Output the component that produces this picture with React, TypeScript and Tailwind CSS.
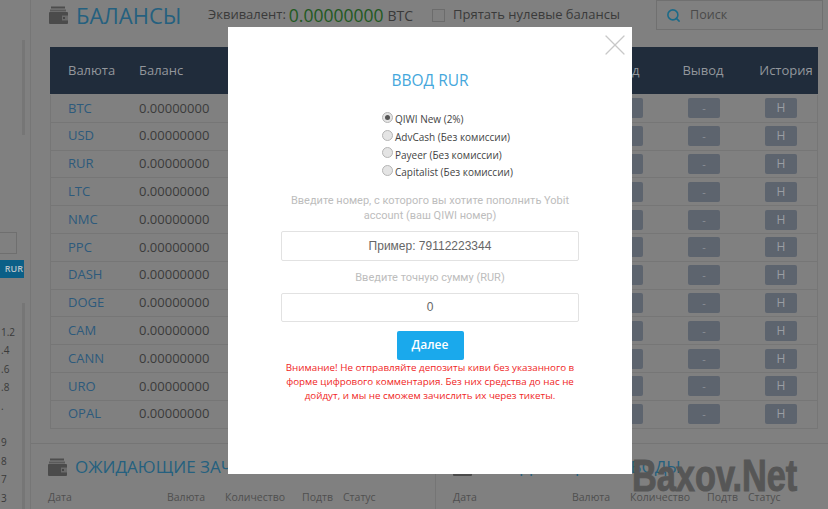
import { Search, X } from 'lucide-react';

const coins = ['BTC', 'USD', 'RUR', 'LTC', 'NMC', 'PPC', 'DASH', 'DOGE', 'CAM', 'CANN', 'URO', 'OPAL'];
const methods = ['QIWI New (2%)', 'AdvCash (Без комиссии)', 'Payeer (Без комиссии)', 'Capitalist (Без комиссии)'];
const sideNumbers = ['1.2', '.4', '.6', '.8', '.', '', '9', '8', '7', '3'];

function WalletIcon() {
  return (
    <svg viewBox="0 0 20 18" className="w-[20px] h-[18px] shrink-0 mr-[7px]">
      <rect x="2" y="0.5" width="14" height="2" fill="#4d4d4d" />
      <rect x="1" y="3.5" width="16" height="2" fill="#5a5a5a" />
      <rect x="0" y="6" width="19" height="12" rx="1" fill="#4b4b4b" />
      <rect x="13" y="9.5" width="6" height="5" fill="#6b6b6b" />
      <circle cx="15" cy="12" r="1" fill="#3a3a3a" />
    </svg>
  );
}

function Sidebar() {
  return (
    <div className="w-[31px] shrink-0 h-full border-r border-[#767676] flex relative">
      <div className="w-[22px] shrink-0 h-full">
        <div className="h-[232px]" />
        <div className="w-[17px] h-[22px] border border-[#6f6f6f] border-l-0" />
        <div className="mt-[6px] h-[18px] w-[24px] bg-[#0b5f87] text-[#b9c4ca] text-[9px] font-semibold leading-[18px] text-right pr-[1px] relative">
          RUR
        </div>
        <div className="mt-[45px] flex flex-col text-[10px] text-[#3a3a3a] leading-[18.4px]">
          {sideNumbers.map((n, i) => (
            <span key={i} className="h-[18.4px] pl-[1px]">{n}</span>
          ))}
        </div>
      </div>
      <div className="w-[3px] shrink-0 h-full flex flex-col">
        <div className="h-[40px]" />
        <div className="h-[95px] bg-[#767676]" />
        <div className="h-[168px]" />
        <div className="flex-1 bg-[#767676]" />
      </div>
    </div>
  );
}

function BalanceRow({ coin }: { coin: string }) {
  return (
    <div className="h-[27.8px] flex items-center border-b border-[#767676] text-[13px]">
      <span className="w-[88px] pl-[17px] text-[#2d5a7c]">{coin}</span>
      <span className="w-[100px] text-[#3b3b3b]">0.00000000</span>
      <div className="flex-1" />
      <div className="w-[32px] h-[20px] rounded-[2px] bg-[#5d646e] text-[#8b9097] text-[11px] leading-[20px] text-center mr-[45px]">-</div>
      <div className="w-[32px] h-[20px] rounded-[2px] bg-[#5d646e] text-[#8b9097] text-[11px] leading-[20px] text-center mr-[45px]">-</div>
      <div className="w-[32px] h-[20px] rounded-[2px] bg-[#5d646e] text-[#9a9ea4] text-[12px] leading-[20px] text-center mr-[20px]">H</div>
    </div>
  );
}

function PendingColumns() {
  return (
    <div className="mt-[13px] flex text-[10.5px] text-[#4f4f4f] h-[14px] leading-[14px]">
      <span className="w-[119px]">Дата</span>
      <span className="w-[58px]">Валюта</span>
      <span className="w-[77px]">Количество</span>
      <span className="w-[41px]">Подтв</span>
      <span>Статус</span>
    </div>
  );
}

function DepositModal() {
  return (
    <div className="absolute left-[228px] top-[27px] w-[404px] h-[447px] bg-white flex flex-col items-center">
      <X className="absolute right-[-1px] top-[0px] w-[36px] h-[36px] text-[#c8c8c8]" strokeWidth={0.8} />
      <h2 className="mt-[43px] h-[20px] text-[15.5px] leading-[20px] text-[#45a7dc]">ВВОД RUR</h2>
      <div className="mt-[21px] self-start ml-[154px] flex flex-col text-[10px] text-[#444] font-['Open_Sans',sans-serif]">
        {methods.map((m, i) => (
          <label key={m} className="h-[17.7px] flex items-center whitespace-nowrap">
            <span className="w-[11px] h-[11px] mr-[2px] -mt-[5px] shrink-0 rounded-full border border-[#b5b5b5] bg-[#e4e4e4] flex items-center justify-center">
              {i === 0 && <span className="w-[5px] h-[5px] rounded-full bg-[#555]" />}
            </span>
            {m}
          </label>
        ))}
      </div>
      <p className="mt-[11px] w-[300px] text-center text-[11px] leading-[15px] text-[#bdbdbd] font-['Roboto',sans-serif]">
        Введите номер, с которого вы хотите пополнить Yobit account (ваш QIWI номер)
      </p>
      <div className="mt-[8px] w-[298px] h-[30px] border border-[#e2e2e2] rounded-[2px] text-center text-[12px] leading-[28px] text-[#666] font-['Liberation_Sans',sans-serif]">
        Пример: 79112223344
      </div>
      <p className="mt-[9px] h-[16px] text-[11px] leading-[16px] text-[#bdbdbd] font-['Roboto',sans-serif]">Введите точную сумму (RUR)</p>
      <div className="mt-[7px] w-[298px] h-[29px] border border-[#e2e2e2] rounded-[2px] text-center text-[12px] leading-[27px] text-[#666] font-['Liberation_Sans',sans-serif]">
        0
      </div>
      <button className="mt-[9px] w-[67px] h-[29px] bg-[#1aa9ec] rounded-[2px] text-white text-[12px] font-semibold">
        Далее
      </button>
      <p className="mt-[1px] w-[300px] text-center text-[9.8px] leading-[14px] text-[#f02525]">
        Внимание! Не отправляйте депозиты киви без указанного в форме цифрового комментария. Без них средства до нас не дойдут, и мы не сможем зачислить их через тикеты.
      </p>
    </div>
  );
}

export default function App() {
  return (
    <div className="relative w-[828px] h-[509px] overflow-hidden bg-[#808080] flex font-['Open_Sans',sans-serif]">
      <Sidebar />
      <main className="flex-1 min-w-0 flex flex-col">
        <div className="h-[30px] mb-[17px] shrink-0 flex items-center pl-[18px]">
          <WalletIcon />
          <h1 className="text-[22px] text-[#25607f] w-[132px] whitespace-nowrap">БАЛАНСЫ</h1>
          <span className="text-[13px] text-[#3a3a3a] whitespace-nowrap">Эквивалент:</span>
          <span className="ml-[3px] text-[17.5px] text-[#1f5a1f] whitespace-nowrap">0.00000000</span>
          <span className="ml-[4px] text-[14px] text-[#3a3a3a] whitespace-nowrap">BTC</span>
          <div className="ml-[19px] w-[13px] h-[13px] border border-[#6c6c6c] shrink-0" />
          <span className="ml-[8px] w-[184px] text-[13px] text-[#3a3a3a] whitespace-nowrap">Прятать нулевые балансы</span>
          <div className="ml-[19px] w-[167px] h-[30px] border border-[#707070] flex items-center pl-[9px] shrink-0">
            <Search className="w-[15px] h-[15px] text-[#1b6a88]" strokeWidth={2.5} />
            <span className="ml-[9px] text-[12.5px] text-[#4a4a4a]">Поиск</span>
          </div>
        </div>
        <div className="ml-[19px] w-[768px] shrink-0">
          <div className="h-[47px] bg-[#202c3b] flex items-center text-[13px] text-[#93979c]">
            <span className="w-[89px] pl-[18px]">Валюта</span>
            <span className="flex-1">Баланс</span>
            <span className="w-[33px]">д</span>
            <span className="w-[76px] text-center mr-[13px]">Вывод</span>
            <span className="w-[64px] text-center">История</span>
          </div>
          <div className="mt-[1px] border-x border-[#767676]">
            {coins.map((c) => (
              <BalanceRow key={c} coin={c} />
            ))}
          </div>
        </div>
        <div className="mt-[14px] flex-1 border-t border-[#757575] flex">
          <div className="w-[405px] shrink-0 border-r border-[#757575] pl-[17px]">
            <div className="mt-[13px] h-[20px] flex items-center whitespace-nowrap">
              <WalletIcon />
              <span className="text-[17px] text-[#25607f]">ОЖИДАЮЩИЕ ЗАЧИСЛЕНИЯ</span>
            </div>
            <PendingColumns />
          </div>
          <div className="flex-1 pl-[17px]">
            <div className="mt-[13px] h-[20px] flex items-center whitespace-nowrap">
              <WalletIcon />
              <span className="text-[17px] text-[#25607f]">ОЖИДАЮЩИЕ ВЫВОДЫ</span>
            </div>
            <PendingColumns />
          </div>
        </div>
      </main>
      {/* watermark stays under the dialog */}
      <span className="absolute left-[632px] top-[458px] origin-left scale-x-[0.78] text-[44px] leading-[36px] font-bold text-[#565656] font-['Liberation_Sans',sans-serif] [-webkit-text-stroke:1px_#565656] whitespace-nowrap">
        Baxov.Net
      </span>
      <DepositModal />
    </div>
  );
}
